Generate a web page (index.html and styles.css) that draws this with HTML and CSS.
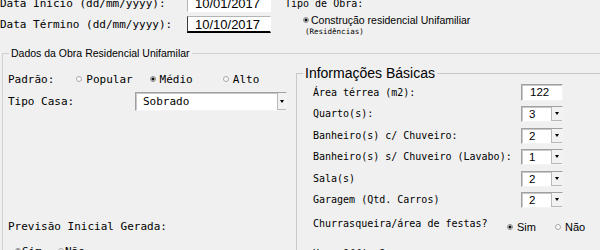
FILE: index.html
```html
<!DOCTYPE html>
<html lang="pt-BR">
<head>
<meta charset="utf-8">
<title>Obra Residencial</title>
<link rel="stylesheet" href="styles.css">
</head>
<body>
<div class="window">
  <div class="header">
    <div class="dates">
      <div class="drow"><span class="dlabel">Data Início (dd/mm/yyyy):</span><div class="date">10/01/2017</div></div>
      <div class="drow"><span class="dlabel">Data Término (dd/mm/yyyy):</span><div class="date focus">10/10/2017</div></div>
    </div>
    <div class="obra">
      <div class="obra-title">Tipo de Obra:</div>
      <div class="obra-opt"><span class="radio on"></span><span>Construção residencial Unifamiliar</span></div>
      <div class="tiny">(Residências)</div>
    </div>
  </div>

  <fieldset class="group main">
    <legend>Dados da Obra Residencial Unifamilar</legend>
    <div class="cols">
      <div class="left">
        <div class="padrao">
          <span class="plabel">Padrão:</span>
          <span class="popt"><span class="radio"></span>Popular</span>
          <span class="popt"><span class="radio on"></span>Médio</span>
          <span class="popt"><span class="radio"></span>Alto</span>
        </div>
        <div class="tipo">
          <span class="tlabel">Tipo Casa:</span>
          <div class="combo big"><span class="val">Sobrado</span><span class="btn"></span></div>
        </div>
        <div class="prev">Previsão Inicial Gerada:</div>
        <div class="prev-opts">
          <span class="lopt"><span class="radio on"></span>Sim</span>
          <span class="lopt"><span class="radio"></span>Não</span>
        </div>
      </div>

      <fieldset class="group info">
        <legend>Informações Básicas</legend>
        <div class="info-body">
          <div class="info-grid">
            <span class="ilabel">Área térrea (m2):</span>
            <div class="textbox">122</div>
            <span class="ilabel">Quarto(s):</span>
            <div class="combo"><span class="val">3</span><span class="btn"></span></div>
            <span class="ilabel">Banheiro(s) c/ Chuveiro:</span>
            <div class="combo"><span class="val">2</span><span class="btn"></span></div>
            <span class="ilabel">Banheiro(s) s/ Chuveiro (Lavabo):</span>
            <div class="combo"><span class="val">1</span><span class="btn"></span></div>
            <span class="ilabel">Sala(s)</span>
            <div class="combo"><span class="val">2</span><span class="btn"></span></div>
            <span class="ilabel">Garagem (Qtd. Carros)</span>
            <div class="combo"><span class="val">2</span><span class="btn"></span></div>
          </div>
          <div class="yn first">
            <span class="ynlabel">Churrasqueira/área de festas?</span>
            <span class="ropt"><span class="radio on"></span>Sim</span>
            <span class="ropt"><span class="radio"></span>Não</span>
          </div>
          <div class="yn second">
            <span class="ynlabel">Home Office?</span>
            <span class="ropt"><span class="radio"></span>Sim</span>
            <span class="ropt"><span class="radio"></span>Não</span>
          </div>
        </div>
      </fieldset>
    </div>
  </fieldset>
</div>
</body>
</html>
```
FILE: styles.css
```css
* { box-sizing: border-box; }
html, body { margin: 0; padding: 0; }
body {
  width: 600px;
  height: 250px;
  overflow: hidden;
  background: #f0f0f0;
  color: #000;
  font-family: "DejaVu Sans Mono", "Liberation Mono", monospace;
  font-size: 11px;
}
.window { width: 600px; }

/* header */
.header { display: flex; margin-top: -5px; height: 51px; }
.dates { width: 283px; display: flex; flex-direction: column; gap: 4px; }
.drow { display: flex; align-items: center; height: 17px; }
.dlabel { width: 187px; white-space: nowrap; line-height: 14px; }
.date {
  width: 84px;
  height: 17px;
  background: #fff;
  font: 13px "Liberation Sans", Arial, sans-serif;
  line-height: 15px;
  padding-left: 7px;
  border-top: 1px solid #b4b4b4;
  border-left: 1px solid #b4b4b4;
  border-right: 1px solid #fff;
  border-bottom: 1px solid #fff;
}
.date.focus { border-left-color: #3a3a3a; border-bottom: 2px solid #000; }

.obra { padding-top: 3px; font-size: 10px; }
.obra-title { line-height: 12px; padding-left: 2px; }
.obra-opt {
  display: flex;
  align-items: center;
  gap: 2px;
  margin-top: 4px;
  padding-left: 20px;
  line-height: 14px;
  font: 10.5px "Liberation Sans", Arial, sans-serif;
}
.tiny { font-size: 7.5px; line-height: 9px; padding-left: 22px; margin-top: 1px; }

/* group boxes */
.group { border: 1px solid #c9c9c9; margin: 0; padding: 0; min-width: 0; }
.group > legend { padding: 0 2px; margin-left: 6px; }
.main { margin-left: 2px; width: 640px; height: 260px; border-color: #d2d2d2; }
.main > legend { font: 10.5px "Liberation Sans", Arial, sans-serif; line-height: 14px; }
.cols { display: flex; align-items: flex-start; }

/* left column */
.left { width: 293px; padding-left: 5px; flex: none; }
.padrao { display: flex; align-items: center; height: 18px; margin-top: 10px; }
.plabel { width: 70px; }
.popt { width: 75px; display: flex; align-items: center; gap: 4px; }
.tipo { display: flex; align-items: center; height: 19px; margin-top: 4px; }
.tlabel { width: 127px; }
.prev { line-height: 14px; margin-top: 109px; }
.prev-opts { display: flex; align-items: center; height: 14px; margin-top: 10px; padding-left: 7px; }
.lopt { display: flex; align-items: center; gap: 1px; width: 43px; }

/* radio */
.radio {
  width: 6px;
  height: 6px;
  border-radius: 50%;
  border: 1px solid #a8a8a8;
  background: #fbfbfb;
  flex: none;
}
.radio.on { background: radial-gradient(circle, #111 0 1.3px, #fbfbfb 1.8px); border-color: #8c8c8c; }

/* inputs */
.combo, .textbox {
  background: #fff;
  border-top: 1px solid #a0a0a0;
  border-left: 1px solid #a0a0a0;
  border-right: 1px solid #f4f4f4;
  border-bottom: 1px solid #f4f4f4;
  box-shadow: inset 1px 1px 0 #c8c8c8;
}
.combo { display: flex; height: 100%; }
.combo .val {
  flex: 1;
  padding-left: 7px;
  font: 11.5px "Liberation Sans", Arial, sans-serif;
  line-height: 14px;
}
.combo .btn {
  width: 11px;
  flex: none;
  background: #f2f2f2;
  border-left: 1px solid #b8b8b8;
  border-bottom: 1px solid #b8b8b8;
  display: flex;
  align-items: center;
  justify-content: center;
}
.combo .btn::before {
  content: "";
  border-left: 2.5px solid transparent;
  border-right: 2.5px solid transparent;
  border-top: 3px solid #000;
}
.combo.big { width: 152px; height: 19px; }
.combo.big .val { font: 11px "DejaVu Sans Mono", monospace; line-height: 17px; }
.combo.big .btn { width: 9px; }
.textbox {
  height: 100%;
  font: 11.5px "Liberation Sans", Arial, sans-serif;
  line-height: 15px;
  padding-left: 8px;
}

/* info group */
.info { flex: 1; margin-top: 4px; height: 240px; }
.info > legend { font: 14px "Liberation Sans", Arial, sans-serif; line-height: 18px; }
.info-body { padding: 2px 0 0 16px; }
.info-grid {
  display: grid;
  grid-template-columns: 208px 42px;
  grid-template-rows: 17px 16px 16px 16px 16px 16px;
  row-gap: 5.4px;
  align-items: center;
  font-size: 10px;
}
.ilabel { white-space: nowrap; line-height: 12px; }
.yn { display: flex; align-items: flex-start; font-size: 10px; line-height: 14px; }
.yn.first { margin-top: 9px; }
.yn.second { margin-top: 13px; }
.ynlabel { width: 194px; white-space: nowrap; }
.ropt {
  width: 48px;
  display: flex;
  align-items: center;
  gap: 4px;
  margin-top: 3px;
  font: 11px "Liberation Sans", Arial, sans-serif;
  line-height: 14px;
}
```
